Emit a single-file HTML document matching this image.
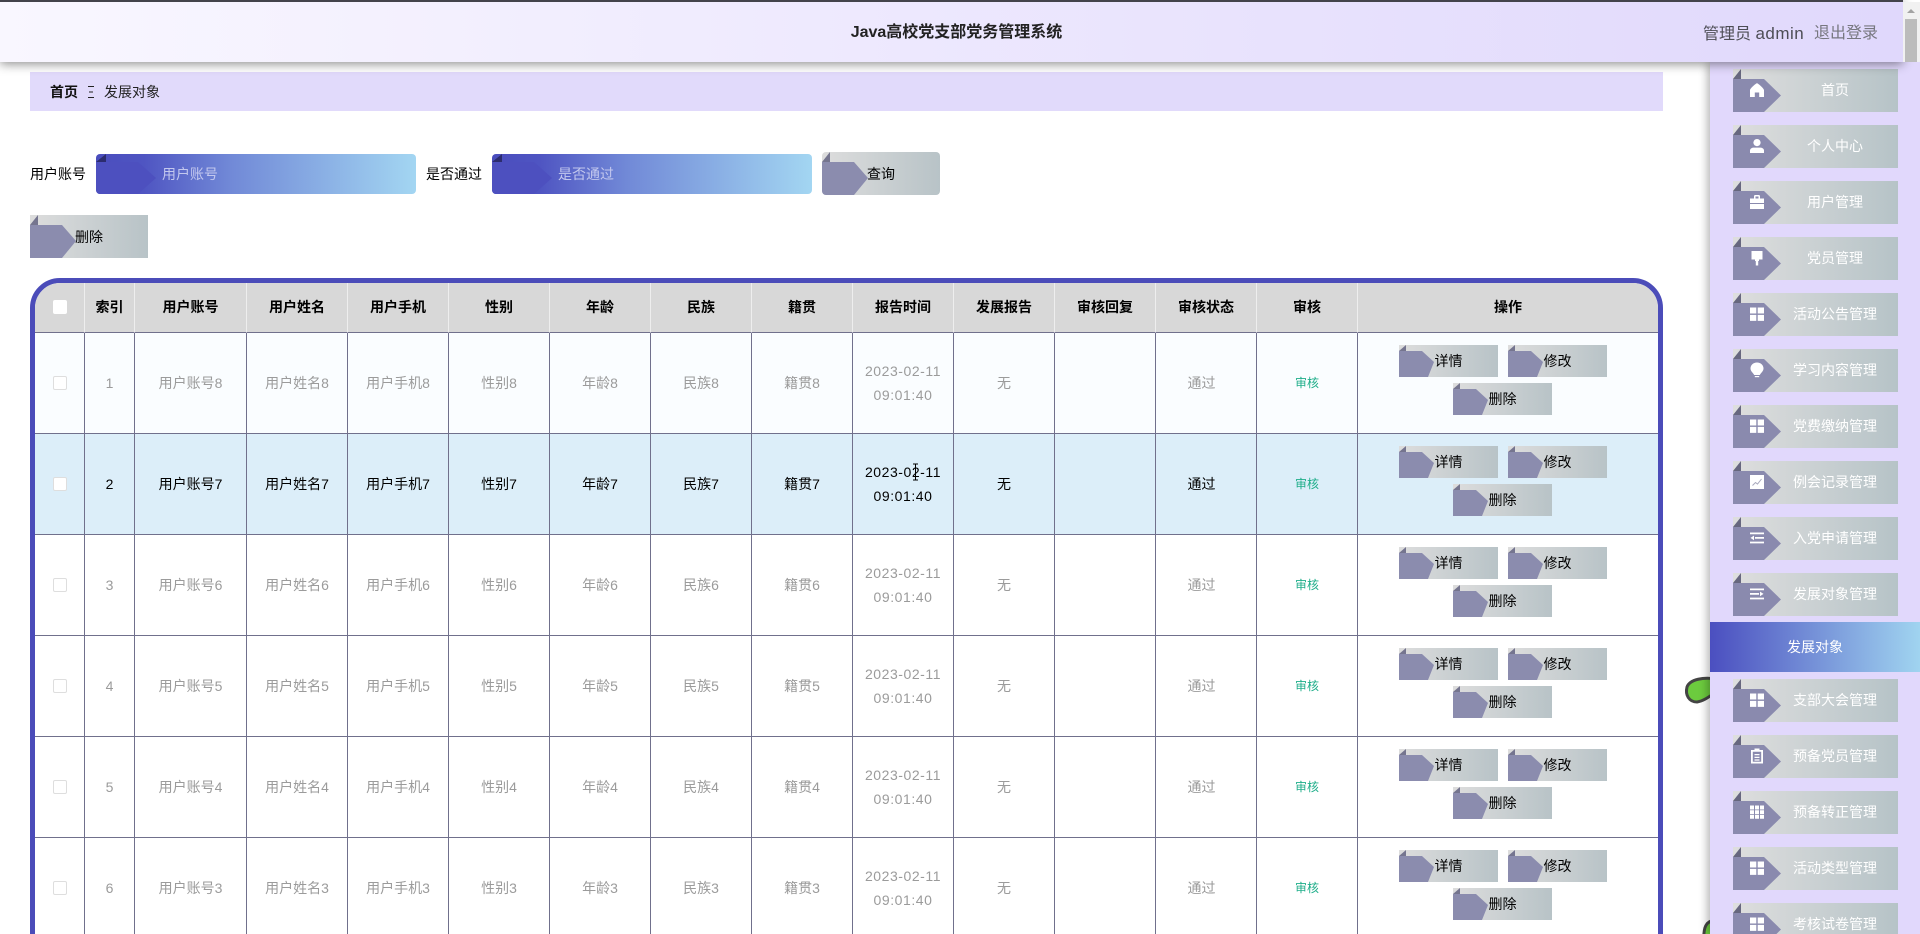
<!DOCTYPE html>
<html lang="zh">
<head>
<meta charset="utf-8">
<title>发展对象</title>
<style>
*{box-sizing:border-box}
html,body{margin:0;padding:0;width:1920px;height:934px;overflow:hidden;background:#fff}
body{position:relative;font:14px "Liberation Sans","Noto Sans CJK SC",sans-serif;color:#000}
.abs{position:absolute}
.hd{position:absolute;left:0;top:0;width:1903px;height:62px;border-top:2px solid #43434b;background:linear-gradient(90deg,#f9f7ff,#e0d8fc);box-shadow:0 2px 10px rgba(0,0,0,.45);z-index:5}
.title{position:absolute;left:0;right:0;top:1px;text-align:center;line-height:60px;font-size:16px;font-weight:bold;color:#222;padding-left:10px}
.sb{position:absolute;left:1903px;top:2px;width:17px;height:60px;background:#f1f1f1;z-index:6}
.sb i{position:absolute;left:2px;top:17px;width:12px;height:43px;background:#bcbcbc}
.sb b{position:absolute;left:4px;top:7px;width:0;height:0;border-left:4px solid transparent;border-right:4px solid transparent;border-bottom:4px solid #a3a3a3}
.crumb{position:absolute;left:30px;top:72px;width:1633px;height:39px;background:#e1dafb;line-height:40px}
.gi{position:absolute;height:40px;width:320px;top:154px;border-radius:4px;background:linear-gradient(90deg,#4a4dbd 0%,#4f55c2 15%,#7189d7 42%,#a3d6f2 100%);overflow:hidden;line-height:40px;color:#c3c8ee;padding-left:66px;isolation:isolate}
.gi:before{content:"";position:absolute;left:0;top:0;width:62px;height:40px;background:#4d50bf;clip-path:polygon(0 8px,42px 8px,60px 24px,42px 40px,0 40px);z-index:-1}
.gi:after{content:"";position:absolute;left:0;top:0;width:10px;height:8px;background:#2c2c6e;clip-path:polygon(0 100%,100% 0,100% 100%)}
.b{position:absolute;width:118px;height:43px;line-height:45px;text-align:center;background:linear-gradient(90deg,#dddddd,#b8c3c7);isolation:isolate;color:#000}
.b:before{content:"";position:absolute;left:0;top:10px;width:48px;height:33px;background:#8b8cae;clip-path:polygon(0 0,32px 0,46px 16px,32px 33px,0 33px);z-index:-1}
.b:after{content:"";position:absolute;left:0;top:0;width:8px;height:10px;background:#75758f;clip-path:polygon(0 100%,100% 0,100% 100%)}
.s{width:99px;height:32px;line-height:33px}
.s:before{top:6px;width:36px;height:26px;clip-path:polygon(0 0,23px 0,35px 11px,29px 26px,0 26px)}
.s:after{width:7px;height:6px}
.wrap{position:absolute;left:30px;top:278px;width:1633px;height:700px;border:5px solid #4b4cb9;border-radius:30px;overflow:hidden}
table{border-collapse:separate;border-spacing:0;table-layout:fixed;width:1623px}
th,td{padding:0;text-align:center;vertical-align:middle;border-right:1px solid #70708c;border-bottom:1px solid #70708c;position:relative;font-weight:normal;color:#9b9b9b;line-height:24px}
th{height:50px;background:#d8d8d8;font-weight:bold;color:#000;border-right-color:#eeeeee;padding-bottom:1px}
td{height:101px;background:#fff}
th:last-child,td:last-child{border-right:0}
.r1 td{background:#fafdff}
.r2 td{background:#dceef9;color:#000}
.dt{letter-spacing:.55px;padding-bottom:1px}
.st{padding-right:9px}
.cb{display:inline-block;position:relative;top:-1px;width:14px;height:14px;background:#fff;border:1px solid #dedede;border-radius:2px;vertical-align:middle}
th .cb{border-color:#fff}
.ok{font-size:12px;color:#1fae8a}
.sd{position:absolute;left:1710px;top:62px;width:210px;height:872px;background:#e1d8fc;box-shadow:-3px 0 8px rgba(0,0,0,.28);z-index:3}
.m{position:absolute;left:23px;width:165px;height:43px;background:linear-gradient(90deg,#dedede,#b6c3c7);isolation:isolate;color:#fff;line-height:42px;padding-left:102px}
.m span{position:absolute;left:0;width:204px;text-align:center;top:0}
.m:before{content:"";position:absolute;left:0;top:10px;width:48px;height:33px;background:#8a8aae;clip-path:polygon(0 0,31px 0,48px 16.5px,31px 33px,0 33px);z-index:-1}
.m:after{content:"";position:absolute;left:0;top:0;width:8px;height:10px;background:#67677f;clip-path:polygon(0 100%,100% 0,100% 100%)}
.m svg{position:absolute;left:16px;top:13px;width:16px;height:16px;fill:#fff}
.act{position:absolute;left:0;top:560px;width:210px;height:50px;line-height:51px;text-align:center;color:#fff;background:linear-gradient(90deg,#4b4fc0,#a0d4f0)}
</style>
</head>
<body>
<svg class="abs" style="left:1680px;top:670px;z-index:1" width="40" height="40" viewBox="0 0 40 40"><path d="M36 9 C24 7 10 9 7 17 C5 25 9 32 17 32 C24 31 30 26 36 22 Z" fill="#6ccb3e" stroke="#444" stroke-width="3"/></svg>
<svg class="abs" style="left:1695px;top:912px;z-index:1" width="25" height="30" viewBox="0 0 25 30"><path d="M20 8 C11 9 8 15 9 30 L20 30 Z" fill="#6ccb3e" stroke="#444" stroke-width="3"/></svg>

<div class="hd">
  <div class="title">Java高校党支部党务管理系统</div>
  <div class="abs" style="left:1703px;top:2px;line-height:60px;font-size:16px;color:#4d4d55;white-space:nowrap">管理员 <span style="font-size:17px;letter-spacing:.5px">admin</span></div>
  <div class="abs" style="left:1814px;top:2px;line-height:60px;font-size:16px;color:#77777f;white-space:nowrap">退出登录</div>
</div>
<div class="sb"><b></b><i></i></div>

<div class="crumb">
  <span class="abs" style="left:20px;font-weight:bold;color:#111">首页</span>
  <svg class="abs" style="left:58px;top:13px" width="8" height="13" viewBox="0 0 8 13"><path d="M0 1.5H6M1 7H5M0 12.5H6" stroke="#222" stroke-width="1" fill="none"/></svg>
  <span class="abs" style="left:74px;color:#222">发展对象</span>
</div>

<div class="abs" style="left:30px;top:154px;line-height:40px">用户账号</div>
<div class="gi" style="left:96px">用户账号</div>
<div class="abs" style="left:426px;top:154px;line-height:40px">是否通过</div>
<div class="gi" style="left:492px">是否通过</div>
<div class="b" style="left:822px;top:152px;border-radius:4px;overflow:hidden">查询</div>
<div class="b" style="left:30px;top:215px">删除</div>

<div class="wrap">
<table>
<colgroup><col style="width:50px"><col style="width:50px"><col style="width:112px"><col style="width:101px"><col style="width:101px"><col style="width:101px"><col style="width:101px"><col style="width:101px"><col style="width:101px"><col style="width:101px"><col style="width:101px"><col style="width:101px"><col style="width:101px"><col style="width:101px"><col style="width:300px"></colgroup>
<tr><th><i class="cb" style="top:-1px"></i></th><th>索引</th><th>用户账号</th><th>用户姓名</th><th>用户手机</th><th>性别</th><th>年龄</th><th>民族</th><th>籍贯</th><th>报告时间</th><th>发展报告</th><th>审核回复</th><th>审核状态</th><th>审核</th><th>操作</th></tr>
<tr class="r1"><td><i class="cb"></i></td><td>1</td><td>用户账号8</td><td>用户姓名8</td><td>用户手机8</td><td>性别8</td><td>年龄8</td><td>民族8</td><td>籍贯8</td><td class="dt">2023-02-11<br>09:01:40</td><td>无</td><td></td><td class="st">通过</td><td class="ok">审核</td><td><div class="b s" style="left:41px;top:12px">详情</div><div class="b s" style="left:150px;top:12px">修改</div><div class="b s" style="left:95px;top:50px">删除</div></td></tr>
<tr class="r2"><td><i class="cb"></i></td><td>2</td><td>用户账号7</td><td>用户姓名7</td><td>用户手机7</td><td>性别7</td><td>年龄7</td><td>民族7</td><td>籍贯7</td><td class="dt">2023-02-11<br>09:01:40</td><td>无</td><td></td><td class="st">通过</td><td class="ok" style="color:#1fae8a">审核</td><td><div class="b s" style="left:41px;top:12px">详情</div><div class="b s" style="left:150px;top:12px">修改</div><div class="b s" style="left:95px;top:50px">删除</div></td></tr>
<tr><td><i class="cb"></i></td><td>3</td><td>用户账号6</td><td>用户姓名6</td><td>用户手机6</td><td>性别6</td><td>年龄6</td><td>民族6</td><td>籍贯6</td><td class="dt">2023-02-11<br>09:01:40</td><td>无</td><td></td><td class="st">通过</td><td class="ok">审核</td><td><div class="b s" style="left:41px;top:12px">详情</div><div class="b s" style="left:150px;top:12px">修改</div><div class="b s" style="left:95px;top:50px">删除</div></td></tr>
<tr><td><i class="cb"></i></td><td>4</td><td>用户账号5</td><td>用户姓名5</td><td>用户手机5</td><td>性别5</td><td>年龄5</td><td>民族5</td><td>籍贯5</td><td class="dt">2023-02-11<br>09:01:40</td><td>无</td><td></td><td class="st">通过</td><td class="ok">审核</td><td><div class="b s" style="left:41px;top:12px">详情</div><div class="b s" style="left:150px;top:12px">修改</div><div class="b s" style="left:95px;top:50px">删除</div></td></tr>
<tr><td><i class="cb"></i></td><td>5</td><td>用户账号4</td><td>用户姓名4</td><td>用户手机4</td><td>性别4</td><td>年龄4</td><td>民族4</td><td>籍贯4</td><td class="dt">2023-02-11<br>09:01:40</td><td>无</td><td></td><td class="st">通过</td><td class="ok">审核</td><td><div class="b s" style="left:41px;top:12px">详情</div><div class="b s" style="left:150px;top:12px">修改</div><div class="b s" style="left:95px;top:50px">删除</div></td></tr>
<tr><td><i class="cb"></i></td><td>6</td><td>用户账号3</td><td>用户姓名3</td><td>用户手机3</td><td>性别3</td><td>年龄3</td><td>民族3</td><td>籍贯3</td><td class="dt">2023-02-11<br>09:01:40</td><td>无</td><td></td><td class="st">通过</td><td class="ok">审核</td><td><div class="b s" style="left:41px;top:12px">详情</div><div class="b s" style="left:150px;top:12px">修改</div><div class="b s" style="left:95px;top:50px">删除</div></td></tr>
</table>
</div>
<svg class="abs" style="left:911px;top:463px" width="9" height="18" viewBox="0 0 9 18"><path d="M2 1H7M4.500 1V17M2 17H7" stroke="#000" stroke-width="1" fill="none"/></svg>

<div class="sd">
  <div class="m" style="top:7px"><svg viewBox="0 0 16 16"><path d="M8 1.200C9 1.200 15 6.500 15 8V15H10.200V10.500H5.800V15H1V8C1 6.500 7 1.200 8 1.200Z"/></svg><span>首页</span></div>
  <div class="m" style="top:63px"><svg viewBox="0 0 16 16"><circle cx="8" cy="4.600" r="3.600"/><path d="M1 12.500C1 10.500 3 9.600 5 9.600H11C13 9.600 15 10.500 15 12.500V15H1Z"/></svg><span>个人中心</span></div>
  <div class="m" style="top:119px"><svg viewBox="0 0 16 16"><path d="M5 4.500V2.200C5 1.500 5.500 1 6.200 1H9.800C10.500 1 11 1.500 11 2.200V4.500H9.500V2.500H6.500V4.500Z"/><path d="M1 4.500H15V9H1Z"/><path d="M1 10H15V15H1Z"/></svg><span>用户管理</span></div>
  <div class="m" style="top:175px"><svg viewBox="0 0 16 16"><path d="M2.500 1H13.500V9.500H10V11H9.200V15.500H6.800V11H6V9.500H2.500Z"/></svg><span>党员管理</span></div>
  <div class="m" style="top:231px"><svg viewBox="0 0 16 16"><path d="M1 1.500H7.300V7.500H1ZM8.700 1.500H15V7.500H8.700ZM1 8.900H7.300V14.900H1ZM8.700 8.900H15V14.900H8.700Z"/></svg><span>活动公告管理</span></div>
  <div class="m" style="top:287px"><svg viewBox="0 0 16 16"><path d="M8 .5C11.800 .5 14.500 3.100 14.500 6.400C14.500 9.500 11.800 10.800 10.800 13H5.200C4.200 10.800 1.500 9.500 1.500 6.400C1.500 3.100 4.200 .5 8 .5Z"/><path d="M5.800 14H10.200V15.200H5.800Z"/></svg><span>学习内容管理</span></div>
  <div class="m" style="top:343px"><svg viewBox="0 0 16 16"><path d="M1 1.500H7.300V7.500H1ZM8.700 1.500H15V7.500H8.700ZM1 8.900H7.300V14.900H1ZM8.700 8.900H15V14.900H8.700Z"/></svg><span>党费缴纳管理</span></div>
  <div class="m" style="top:399px"><svg viewBox="0 0 16 16"><path d="M1 1H15V15H1Z"/><path d="M3.500 11.500L6.500 8.500L8.500 10L12.500 5" stroke="#a9a9bd" stroke-width="1" fill="none"/></svg><span>例会记录管理</span></div>
  <div class="m" style="top:455px"><svg viewBox="0 0 16 16"><path d="M1 2.500H15V4.300H1ZM6 7H15V8.800H6ZM1 11.600H15V13.400H1ZM5 5.600V10.200L1.500 7.900Z"/></svg><span>入党申请管理</span></div>
  <div class="m" style="top:511px"><svg viewBox="0 0 16 16"><path d="M1 2.500H15V4.300H1ZM1 7H10V8.800H1ZM1 11.600H15V13.400H1ZM11 5.600V10.200L14.500 7.900Z"/></svg><span>发展对象管理</span></div>
  <div class="act">发展对象</div>
  <div class="m" style="top:617px"><svg viewBox="0 0 16 16"><path d="M1 1.500H7.300V7.500H1ZM8.700 1.500H15V7.500H8.700ZM1 8.900H7.300V14.900H1ZM8.700 8.900H15V14.900H8.700Z"/></svg><span>支部大会管理</span></div>
  <div class="m" style="top:673px"><svg viewBox="0 0 16 16"><path fill-rule="evenodd" d="M5.500 .5H10.500V2H14V15.500H2V2H5.500ZM3.800 3.800V13.700H12.200V3.800ZM5.500 6H10.500V7.200H5.500ZM5.500 8.800H10.500V10H5.500ZM5.500 11.400H10.500V12.600H5.500Z"/></svg><span>预备党员管理</span></div>
  <div class="m" style="top:729px"><svg viewBox="0 0 16 16"><path d="M1 1.500H5V5.500H1ZM6 1.500H10V5.500H6ZM11 1.500H15V5.500H11ZM1 6.200H5V10H1ZM6 6.200H10V10H6ZM11 6.200H15V10H11ZM1 10.800H5V14.800H1ZM6 10.800H10V14.800H6ZM11 10.800H15V14.800H11Z"/></svg><span>预备转正管理</span></div>
  <div class="m" style="top:785px"><svg viewBox="0 0 16 16"><path d="M1 1.500H7.300V7.500H1ZM8.700 1.500H15V7.500H8.700ZM1 8.900H7.300V14.900H1ZM8.700 8.900H15V14.900H8.700Z"/></svg><span>活动类型管理</span></div>
  <div class="m" style="top:841px"><svg viewBox="0 0 16 16"><path d="M1 1.500H7.300V7.500H1ZM8.700 1.500H15V7.500H8.700ZM1 8.900H7.300V14.900H1ZM8.700 8.900H15V14.900H8.700Z"/></svg><span>考核试卷管理</span></div>
</div>
</body>
</html>
